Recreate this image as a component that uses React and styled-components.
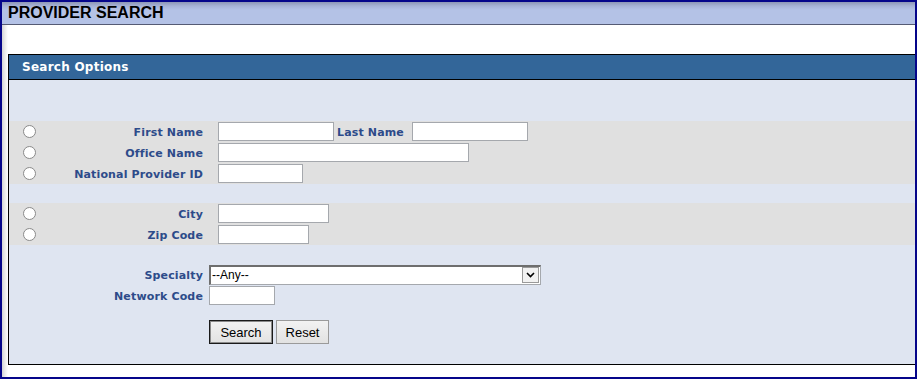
import React from "react";
import styled, { createGlobalStyle } from "styled-components";

const Global = createGlobalStyle`
  html, body { margin: 0; padding: 0; background: #ffffff; }
  body { font-family: "Liberation Sans", Arial, sans-serif; }
  * { box-sizing: border-box; }
`;

const Frame = styled.div`
  width: 917px;
  height: 379px;
  border: 2px solid #05058a;
  display: flex;
  flex-direction: column;
  background: #ffffff;
`;

const TitleBar = styled.div`
  height: 23px;
  flex: none;
  background: linear-gradient(#8e97b6 0px, #a7b3d6 4px, #b4c2e6 8px, #b4c2e6 100%);
  border-bottom: 1px solid #555b74;
  display: flex;
  align-items: center;
  padding-left: 6px;
`;

const Title = styled.h1`
  margin: 0;
  font: bold 16px "Liberation Sans", Arial, sans-serif;
  color: #000000;
  line-height: 20px;
`;

const Content = styled.div`
  flex: 1;
  padding: 29px 0 12px 6px;
  background: linear-gradient(90deg, #d4d4d4 0px, #ececec 3px, #ffffff 6px) no-repeat left top / 6px 100%, #ffffff;
  display: flex;
  flex-direction: column;
`;

const Panel = styled.section`
  border: 1px solid #000000;
  border-right: none;
  display: flex;
  flex-direction: column;
  flex: 1;
`;

const PanelHeader = styled.div`
  height: 25px;
  flex: none;
  background: #336699;
  border-bottom: 1px solid #000000;
  color: #ffffff;
  font: bold 12px "DejaVu Sans", Verdana, sans-serif;
  letter-spacing: 0.25px;
  display: flex;
  align-items: center;
  padding-left: 13px;
`;

const PanelBody = styled.div`
  flex: 1;
  background: #dfe5f1;
  padding-top: 41px;
  display: flex;
  flex-direction: column;
`;

const Band = styled.div`
  background: ${(p) => (p.$shaded ? "#e0e0e0" : "transparent")};
  display: flex;
  flex-direction: column;
`;

const Spacer = styled.div`
  height: ${(p) => p.$h}px;
  flex: none;
`;

const Row = styled.div`
  height: ${(p) => p.$h || 21}px;
  display: flex;
  align-items: center;
`;

const RadioCell = styled.div`
  width: 27px;
  padding-left: 14px;
  display: flex;
  align-items: center;
  flex: none;
`;

const Radio = styled.input.attrs({ type: "radio" })`
  appearance: none;
  -webkit-appearance: none;
  margin: 0;
  width: 13px;
  height: 13px;
  border-radius: 50%;
  border: 1px solid #8a8a8a;
  background: #ffffff;
  flex: none;
`;

const Label = styled.label`
  width: ${(p) => p.$w || 167}px;
  flex: none;
  text-align: right;
  font: bold 11px "DejaVu Sans", Verdana, sans-serif;
  letter-spacing: 0.15px;
  color: #2d4b8a;
  margin-right: ${(p) => p.$gap || 15}px;
  padding-top: 1px;
  white-space: nowrap;
`;

const InlineLabel = styled(Label)`
  width: auto;
  margin-left: 3px;
  margin-right: 8px;
`;

const TextInput = styled.input.attrs({ type: "text" })`
  width: ${(p) => p.$w}px;
  height: 19px;
  margin: 0;
  padding: 0 2px;
  border: 1px solid #a5a8ad;
  background: #ffffff;
  font: 13px "Liberation Sans", Arial, sans-serif;
  flex: none;
`;

const SelectBox = styled.div`
  position: relative;
  width: 332px;
  height: 20px;
  flex: none;
`;

const Select = styled.select`
  appearance: none;
  -webkit-appearance: none;
  width: 100%;
  height: 100%;
  margin: 0;
  padding: 0 0 0 1px;
  border: 1px solid #a5a8ad;
  border-top: 2px solid #6e6e6e;
  border-left: 2px solid #6e6e6e;
  background: #ffffff;
  font: 12px "Liberation Sans", Arial, sans-serif;
  color: #000000;
`;

const Arrow = styled.span`
  position: absolute;
  right: 2px;
  top: 2px;
  width: 17px;
  height: 16px;
  border: 1px solid #9a9a9a;
  background: #f2f2f2;
  display: flex;
  align-items: center;
  justify-content: center;
  pointer-events: none;
`;

const ButtonRow = styled.div`
  display: flex;
  gap: 3px;
  padding-left: 200px;
  height: 24px;
`;

const Button = styled.button`
  height: 24px;
  width: ${(p) => p.$w}px;
  margin: 0;
  padding: 0;
  font: 13px "Liberation Sans", Arial, sans-serif;
  color: #000000;
  background: linear-gradient(#f2f2f2, #e2e2e2);
  border: 1px solid ${(p) => (p.$primary ? "#1a1a1a" : "#9a9a9a")};
  box-shadow: ${(p) => (p.$primary ? "inset 0 0 0 1px #8a8a8a" : "none")};
  border-radius: 0;
`;

export default function App() {
  return (
    <>
      <Global />
      <Frame>
        <TitleBar>
          <Title>PROVIDER SEARCH</Title>
        </TitleBar>
        <Content>
          <Panel>
            <PanelHeader>Search Options</PanelHeader>
            <PanelBody>
              <Band $shaded>
                <Row>
                  <RadioCell><Radio name="by" /></RadioCell>
                  <Label>First Name</Label>
                  <TextInput $w={116} />
                  <InlineLabel>Last Name</InlineLabel>
                  <TextInput $w={116} />
                </Row>
                <Row>
                  <RadioCell><Radio name="by" /></RadioCell>
                  <Label>Office Name</Label>
                  <TextInput $w={251} />
                </Row>
                <Row>
                  <RadioCell><Radio name="by" /></RadioCell>
                  <Label>National Provider ID</Label>
                  <TextInput $w={85} />
                </Row>
              </Band>
              <Spacer $h={19} />
              <Band $shaded>
                <Row>
                  <RadioCell><Radio name="by" /></RadioCell>
                  <Label>City</Label>
                  <TextInput $w={111} />
                </Row>
                <Row>
                  <RadioCell><Radio name="by" /></RadioCell>
                  <Label>Zip Code</Label>
                  <TextInput $w={91} />
                </Row>
              </Band>
              <Spacer $h={19} />
              <Band>
                <Row>
                  <Label $w={194} $gap={6}>Specialty</Label>
                  <SelectBox>
                    <Select defaultValue="any">
                      <option value="any">--Any--</option>
                    </Select>
                    <Arrow>
                      <svg width="9" height="6" viewBox="0 0 9 6">
                        <path d="M1 1 L4.5 4.5 L8 1" fill="none" stroke="#000" strokeWidth="1.6" />
                      </svg>
                    </Arrow>
                  </SelectBox>
                </Row>
                <Row>
                  <Label $w={194} $gap={6}>Network Code</Label>
                  <TextInput $w={66} />
                </Row>
              </Band>
              <Spacer $h={14} />
              <ButtonRow>
                <Button $primary $w={64}>Search</Button>
                <Button $w={53}>Reset</Button>
              </ButtonRow>
            </PanelBody>
          </Panel>
        </Content>
      </Frame>
    </>
  );
}
